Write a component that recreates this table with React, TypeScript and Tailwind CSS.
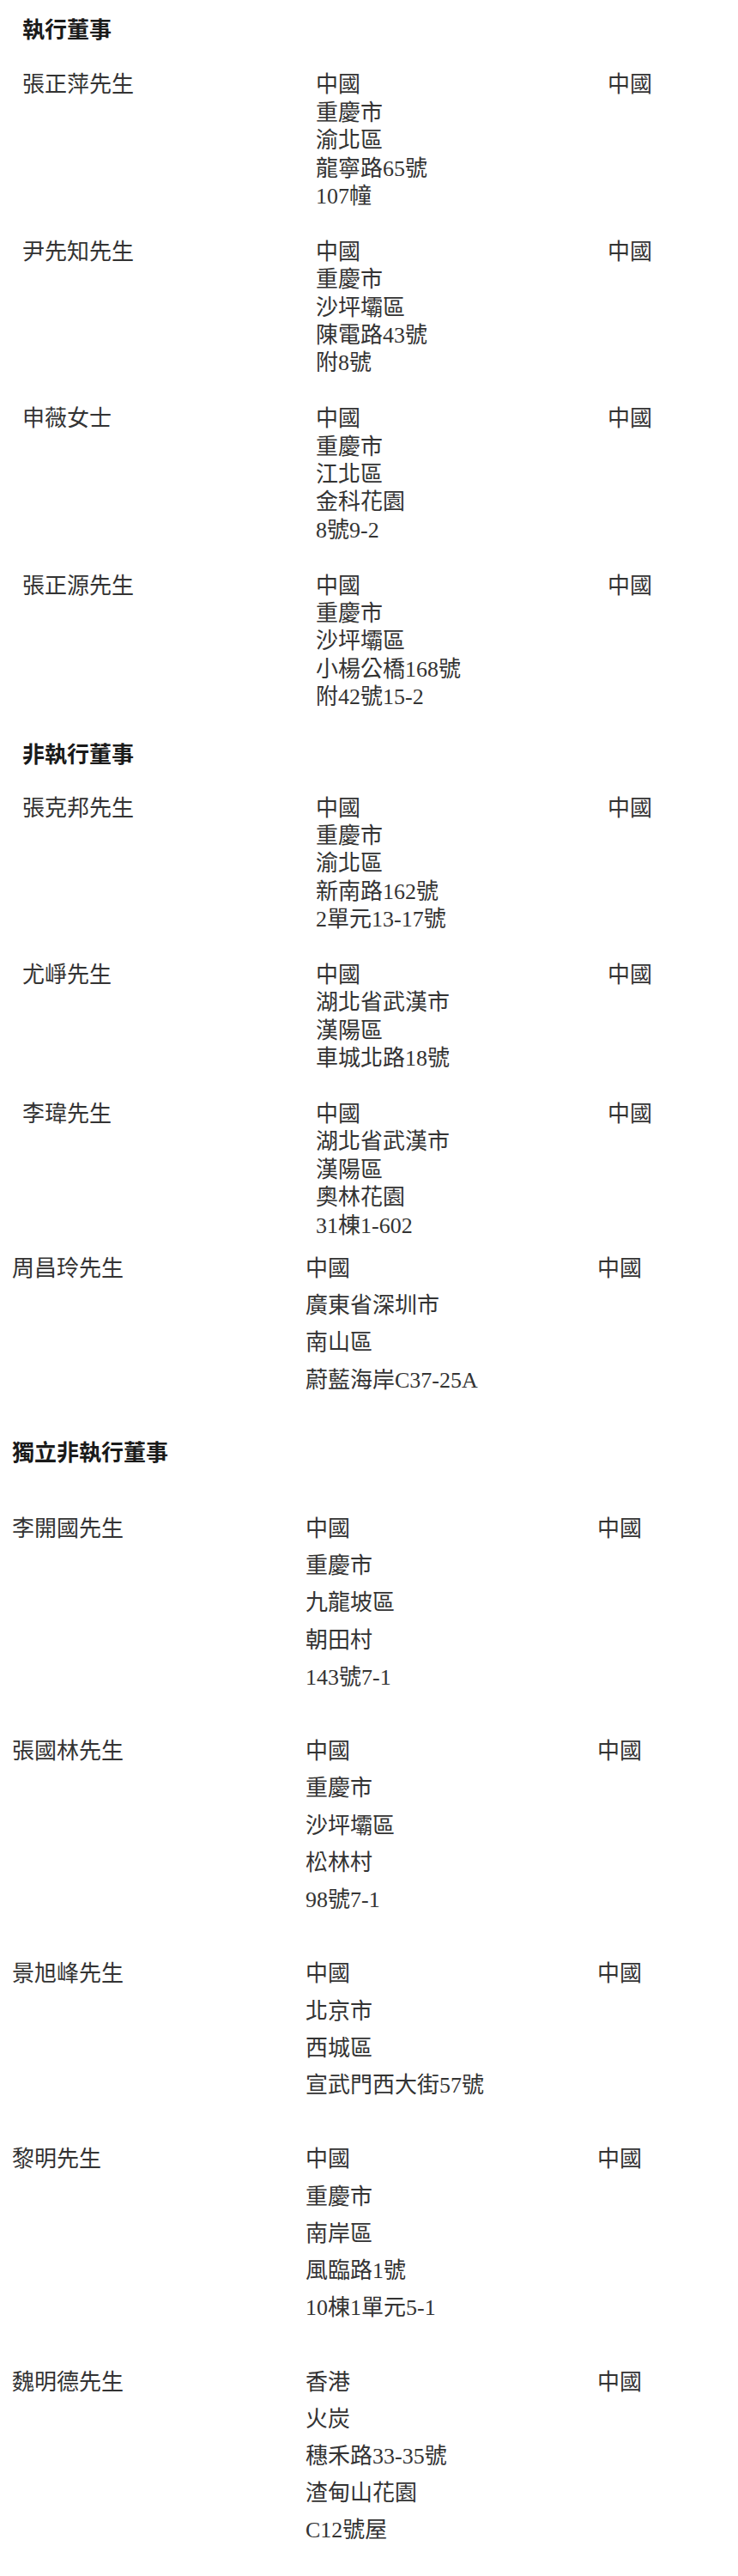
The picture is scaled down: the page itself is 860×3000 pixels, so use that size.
const executive = [
  { name: '張正萍先生', address: ['中國', '重慶市', '渝北區', '龍寧路65號', '107幢'], nationality: '中國' },
  { name: '尹先知先生', address: ['中國', '重慶市', '沙坪壩區', '陳電路43號', '附8號'], nationality: '中國' },
  { name: '申薇女士', address: ['中國', '重慶市', '江北區', '金科花園', '8號9-2'], nationality: '中國' },
  { name: '張正源先生', address: ['中國', '重慶市', '沙坪壩區', '小楊公橋168號', '附42號15-2'], nationality: '中國' },
];

const nonExecutive = [
  { name: '張克邦先生', address: ['中國', '重慶市', '渝北區', '新南路162號', '2單元13-17號'], nationality: '中國' },
  { name: '尤崢先生', address: ['中國', '湖北省武漢市', '漢陽區', '車城北路18號'], nationality: '中國' },
  { name: '李瑋先生', address: ['中國', '湖北省武漢市', '漢陽區', '奧林花園', '31棟1-602'], nationality: '中國' },
];

const zhou = { name: '周昌玲先生', address: ['中國', '廣東省深圳市', '南山區', '蔚藍海岸C37-25A'], nationality: '中國' };

const independent = [
  { name: '李開國先生', address: ['中國', '重慶市', '九龍坡區', '朝田村', '143號7-1'], nationality: '中國' },
  { name: '張國林先生', address: ['中國', '重慶市', '沙坪壩區', '松林村', '98號7-1'], nationality: '中國' },
  { name: '景旭峰先生', address: ['中國', '北京市', '西城區', '宣武門西大街57號'], nationality: '中國' },
  { name: '黎明先生', address: ['中國', '重慶市', '南岸區', '風臨路1號', '10棟1單元5-1'], nationality: '中國' },
  { name: '魏明德先生', address: ['香港', '火炭', '穗禾路33-35號', '渣甸山花園', 'C12號屋'], nationality: '中國' },
];

type Director = { name: string; address: string[]; nationality: string };

const body = "font-['Liberation_Serif','Noto_Sans_CJK_TC',serif] text-[26px] text-[#333]";
const heading = "font-['Noto_Sans_CJK_TC',sans-serif] text-[26px] font-semibold text-[#1a1a1a]";

function Row({ d, tight }: { d: Director; tight: boolean }) {
  return (
    <div className={`grid grid-cols-[342px_340px_1fr] ${body} ${tight ? 'leading-[32.4px]' : 'leading-[43.2px]'}`}>
      <div>{d.name}</div>
      <div>
        {d.address.map((line, i) => (
          <div key={i}>{line}</div>
        ))}
      </div>
      <div>{d.nationality}</div>
    </div>
  );
}

export default function App() {
  return (
    <div className="w-[860px] bg-white min-h-[3000px]">
      {/* upper part: tighter line spacing */}
      <div className="pl-[26px] pt-[17px]">
        <h2 className={`${heading} leading-[32.4px] mb-[34px]`}>執行董事</h2>
        <div className="flex flex-col gap-[32.4px]">
          {executive.map((d) => (
            <Row key={d.name} d={d} tight />
          ))}
        </div>

        <h2 className={`${heading} leading-[32.4px] mt-[32.4px] mb-[32px]`}>非執行董事</h2>
        <div className="flex flex-col gap-[32.4px]">
          {nonExecutive.map((d) => (
            <Row key={d.name} d={d} tight />
          ))}
        </div>
      </div>

      {/* lower part: looser line spacing, shifted left */}
      <div className="pl-[14px] pt-[12px]">
        <Row d={zhou} tight={false} />

        <h2 className={`${heading} leading-[43.2px] mt-[39.6px] mb-[47.4px]`}>獨立非執行董事</h2>
        <div className="flex flex-col gap-[43.2px]">
          {independent.map((d) => (
            <Row key={d.name} d={d} tight={false} />
          ))}
        </div>
      </div>
    </div>
  );
}
